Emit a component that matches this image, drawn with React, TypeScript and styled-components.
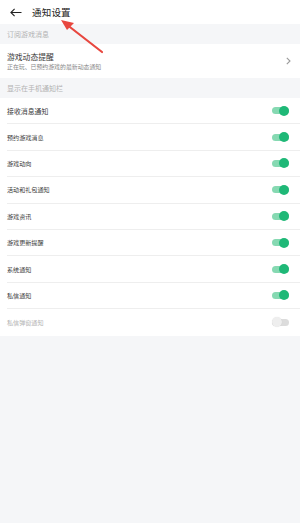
import React, { useState } from 'react';
import styled, { createGlobalStyle } from 'styled-components';

const green = '#1fb877';
const greenLight = '#86d9b2';
const text = '#3a3a3a';
const grey = '#b3b3b3';
const bg = '#f5f6f8';
const line = '#eeeeee';

const GlobalStyle = createGlobalStyle`
  html, body {
    margin: 0;
    padding: 0;
    background: ${bg};
  }
  * {
    box-sizing: border-box;
  }
  body {
    font-family: 'Noto Sans CJK SC', 'Noto Sans', sans-serif;
  }
`;

type ToggleItem = {
  label: string;
  on: boolean;
  big?: boolean;
  disabled?: boolean;
};

const items: ToggleItem[] = [
  { label: '接收消息通知', on: true, big: true },
  { label: '预约游戏消息', on: true },
  { label: '游戏动向', on: true },
  { label: '活动和礼包通知', on: true },
  { label: '游戏资讯', on: true },
  { label: '游戏更新提醒', on: true },
  { label: '系统通知', on: true },
  { label: '私信通知', on: true },
  { label: '私信弹窗通知', on: false, disabled: true },
];

const App = () => {
  const [states, setStates] = useState<boolean[]>(items.map((el) => el.on));

  const toggleHandler = (idx: number) => {
    if (items[idx].disabled) return;
    setStates(states.map((s, i) => (i === idx ? !s : s)));
  };

  return (
    <Page>
      <GlobalStyle />
      {/* 顶部栏 */}
      <Header>
        <BackButton>
          <svg width='12' height='9' viewBox='0 0 12 9' fill='none'>
            <path d='M11.5 4.5H1M4.6 0.8L0.9 4.5L4.6 8.2' stroke='#222' strokeWidth='1.1' />
          </svg>
        </BackButton>
        <Title>通知设置</Title>
      </Header>

      {/* 订阅 */}
      <SectionTitle>订阅游戏消息</SectionTitle>
      <LinkRow>
        <LinkText>
          <LinkTitle>游戏动态提醒</LinkTitle>
          <LinkDesc>正在玩、已预约游戏的最新动态通知</LinkDesc>
        </LinkText>
        <svg width='5' height='8' viewBox='0 0 5 8'>
          <path d='M0.8 0.8L4 4L0.8 7.2' stroke='#9a9a9a' strokeWidth='1.1' fill='none' />
        </svg>
      </LinkRow>

      {/* 通知栏 */}
      <SectionTitle>显示在手机通知栏</SectionTitle>
      <List>
        {items.map((el, idx) => (
          <Row key={idx}>
            <RowLabel big={el.big} disabled={el.disabled}>
              {el.label}
            </RowLabel>
            <Switch on={states[idx]} disabled={el.disabled} onClick={() => toggleHandler(idx)}>
              <Knob on={states[idx]} disabled={el.disabled} />
            </Switch>
          </Row>
        ))}
      </List>

      {/* 红色箭头标注 */}
      <Annotation width='60' height='50' viewBox='0 0 60 50'>
        <path d='M50 41L14 13' stroke='#e8473f' strokeWidth='2.2' strokeLinecap='round' />
        <path d='M9 9L22 12L15 19Z' fill='#e8473f' />
      </Annotation>
    </Page>
  );
};

const Page = styled.div`
  position: relative;
  width: 300px;
  min-height: 523px;
  background: ${bg};
`;

const Header = styled.div`
  height: 24px;
  display: flex;
  align-items: center;
  padding-left: 10px;
  background: white;
`;

const BackButton = styled.div`
  width: 14px;
  height: 14px;
  display: flex;
  align-items: center;
  margin-right: 8px;
`;

const Title = styled.div`
  font-size: 9.5px;
  color: #222;
  letter-spacing: 0.2px;
`;

const SectionTitle = styled.div`
  height: 20px;
  display: flex;
  align-items: center;
  padding-left: 7px;
  font-size: 7px;
  color: ${grey};
  background: ${bg};
`;

const LinkRow = styled.div`
  height: 34px;
  display: flex;
  align-items: center;
  justify-content: space-between;
  padding: 0 9px 0 7px;
  background: white;
`;

const LinkText = styled.div`
  display: flex;
  flex-direction: column;
  gap: 1px;
`;

const LinkTitle = styled.div`
  font-size: 7.8px;
  line-height: 11px;
  color: ${text};
`;

const LinkDesc = styled.div`
  font-size: 5.9px;
  line-height: 8px;
  color: #888;
`;

const List = styled.div`
  background: white;
  padding-left: 7px;
`;

const Row = styled.div`
  height: 26.4px;
  display: flex;
  align-items: center;
  justify-content: space-between;
  padding-right: 11px;
  border-bottom: 1px solid ${line};

  &:last-child {
    border-bottom: 0;
  }
`;

const RowLabel = styled.div<{ big?: boolean; disabled?: boolean }>`
  font-size: ${(p) => (p.big ? '6.9px' : '6.1px')};
  color: ${(p) => (p.disabled ? grey : text)};
`;

const Switch = styled.div<{ on: boolean; disabled?: boolean }>`
  position: relative;
  width: 17px;
  height: 7px;
  border-radius: 4px;
  background: ${(p) => (p.disabled ? '#dcdcdc' : p.on ? greenLight : '#dddddd')};
  cursor: pointer;
`;

const Knob = styled.div<{ on: boolean; disabled?: boolean }>`
  position: absolute;
  top: -1.5px;
  left: ${(p) => (p.on ? '7px' : '0px')};
  width: 10px;
  height: 10px;
  border-radius: 50%;
  background: ${(p) => (p.disabled ? '#eeeeee' : p.on ? green : '#fafafa')};
  box-shadow: ${(p) => (p.on ? 'none' : '0 0 1px rgba(0,0,0,0.12)')};
`;

const Annotation = styled.svg`
  position: absolute;
  top: 11px;
  left: 52px;
  pointer-events: none;
`;

export default App;
